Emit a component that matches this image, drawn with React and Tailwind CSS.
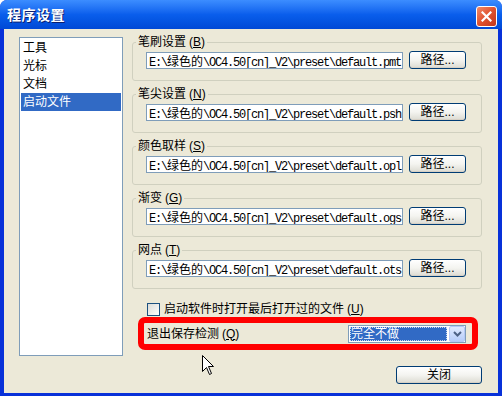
import React from "react";

const SANS = "font-['Liberation_Sans','Noto_Sans_CJK_SC',sans-serif]";

function Key({ k }) {
  return (
    <span className="ml-[3px]">
      (<span className="underline underline-offset-[1px]">{k}</span>)
    </span>
  );
}

function PathInput({ ext }) {
  const cjk = "text-[12px] tracking-normal font-['Noto_Sans_CJK_SC',sans-serif]";
  return (
    <div className="w-[257px] h-[17px] border border-[#7F9DB9] bg-white overflow-hidden whitespace-nowrap pl-[2px] leading-[15px] text-[12px] tracking-[-1.2px] font-['Liberation_Mono','Noto_Sans_CJK_SC',monospace]">
      {"E:\\"}
      <span className={cjk}>绿色的</span>
      {"\\OC4.50[cn]_V2\\preset\\default." + ext}
    </div>
  );
}

function XPButton({ children, w }) {
  return (
    <div
      className={`${w} h-[18px] border border-[#003C74] rounded-[3px] bg-linear-to-b from-white via-[#F4F4F0] to-[#DCDBD2] flex items-center justify-center leading-[14px] shadow-[inset_0_-1px_0_#D6D0C5]`}
    >
      {children}
    </div>
  );
}

function Group({ label, k, ext }) {
  return (
    <fieldset className="border border-[#D0D0BF] rounded-[3px] px-[3px] pb-[11px] h-[46px]">
      <legend className="px-[2px] leading-[14px]">
        {label}
        <Key k={k} />
      </legend>
      <div className="pt-[2px] pl-[10px] flex items-center gap-[6px]">
        <PathInput ext={ext} />
        <XPButton w="w-[57px]">路径...</XPButton>
      </div>
    </fieldset>
  );
}

function Cursor() {
  return (
    <svg
      className="absolute left-[202px] top-[355px]"
      width="13"
      height="21"
      viewBox="0 0 13 21"
    >
      <path
        d="M0.5 0.5 L0.5 16.5 L4.5 12.5 L7.5 19.5 L9.5 18.5 L6.5 11.5 L11.5 11.5 Z"
        fill="white"
        stroke="black"
        strokeWidth="1"
        strokeLinejoin="miter"
      />
    </svg>
  );
}

export default function App() {
  const items = ["工具", "光标", "文档", "启动文件"];
  return (
    <div className={`relative w-[502px] h-[396px] bg-white text-[12px] leading-[14px] text-black ${SANS}`}>
      <div className="w-[502px] h-[396px] flex flex-col bg-[#0831D9] rounded-t-[7px] overflow-hidden">
        {/* title bar */}
        <div className="h-[29px] shrink-0 flex justify-between pl-[7px] pr-[5px] bg-linear-to-b from-[#3C8DFF] via-[#0A5EEC] to-[#0049D6]">
          <div className="self-center text-white font-bold text-[14px] tracking-[0.5px] leading-[16px] [text-shadow:1px_1px_0_#0A1E6E]">
            程序设置
          </div>
          <div className="mt-[6px] w-[21px] h-[21px] rounded-[3px] border border-white bg-linear-to-br from-[#F08A68] via-[#E0512E] to-[#C2351A] flex items-center justify-center">
            <svg width="11" height="11" viewBox="0 0 11 11">
              <path d="M1.5 1.5 L9.5 9.5 M9.5 1.5 L1.5 9.5" stroke="white" strokeWidth="2.2" strokeLinecap="square" />
            </svg>
          </div>
        </div>
        {/* body */}
        <div className="flex-1 ml-[4px] mr-[4px] mb-[3px] bg-[#ECE9D8] flex pl-[15px] pt-[6px] gap-[9px]">
          <div className="mt-[2px] w-[104px] h-[319px] border border-[#7F9DB9] bg-white p-[1px] flex flex-col">
            {items.map((t, i) => (
              <div
                key={t}
                className={`h-[18px] leading-[18px] pl-[2px] ${i === 3 ? "bg-[#316AC5] text-white" : ""}`}
              >
                {t}
              </div>
            ))}
          </div>
          <div className="w-[350px] flex flex-col">
            <div className="flex flex-col gap-[6px]">
              <Group label="笔刷设置" k="B" ext="pmt" />
              <Group label="笔尖设置" k="N" ext="psh" />
              <Group label="颜色取样" k="S" ext="opl" />
              <Group label="渐变" k="G" ext="ogs" />
              <Group label="网点" k="T" ext="ots" />
            </div>
            <div className="mt-[14px] ml-[15px] flex items-center gap-[4px] h-[13px]">
              <div className="w-[13px] h-[13px] border border-[#1C5180] bg-linear-to-br from-[#DCDCD7] to-white" />
              <span className="leading-[13px]">
                启动软件时打开最后打开过的文件
                <Key k="U" />
              </span>
            </div>
            <div className="mt-[1px] ml-[6px] w-[340px] h-[33px] border-[6px] border-[#FF0000] rounded-[7px] flex items-center justify-between pl-[3px] pr-[6px]">
              <span>
                退出保存检测
                <Key k="Q" />
              </span>
              <div className="w-[118px] h-[18px] border border-[#7F9DB9] bg-white flex items-center justify-between pl-[1px] pr-0">
                <div className="w-[97px] h-[14px] bg-[#316AC5] text-white outline-1 outline-dotted outline-[#C8D8F0] -outline-offset-1 leading-[14px] pl-[1px]">
                  完全不做
                </div>
                <div className="w-[16px] h-[16px] rounded-[2px] bg-linear-to-b from-[#E0EAFE] to-[#B6CCF9] border border-[#B4C8F6] flex items-center justify-center">
                  <svg width="9" height="6" viewBox="0 0 9 6">
                    <path d="M1 1 L4.5 4.5 L8 1" stroke="#4D6185" strokeWidth="2" fill="none" />
                  </svg>
                </div>
              </div>
            </div>
            <div className="mt-[16px] flex justify-end">
              <XPButton w="w-[86px]">关闭</XPButton>
            </div>
          </div>
        </div>
      </div>
      <Cursor />
    </div>
  );
}
